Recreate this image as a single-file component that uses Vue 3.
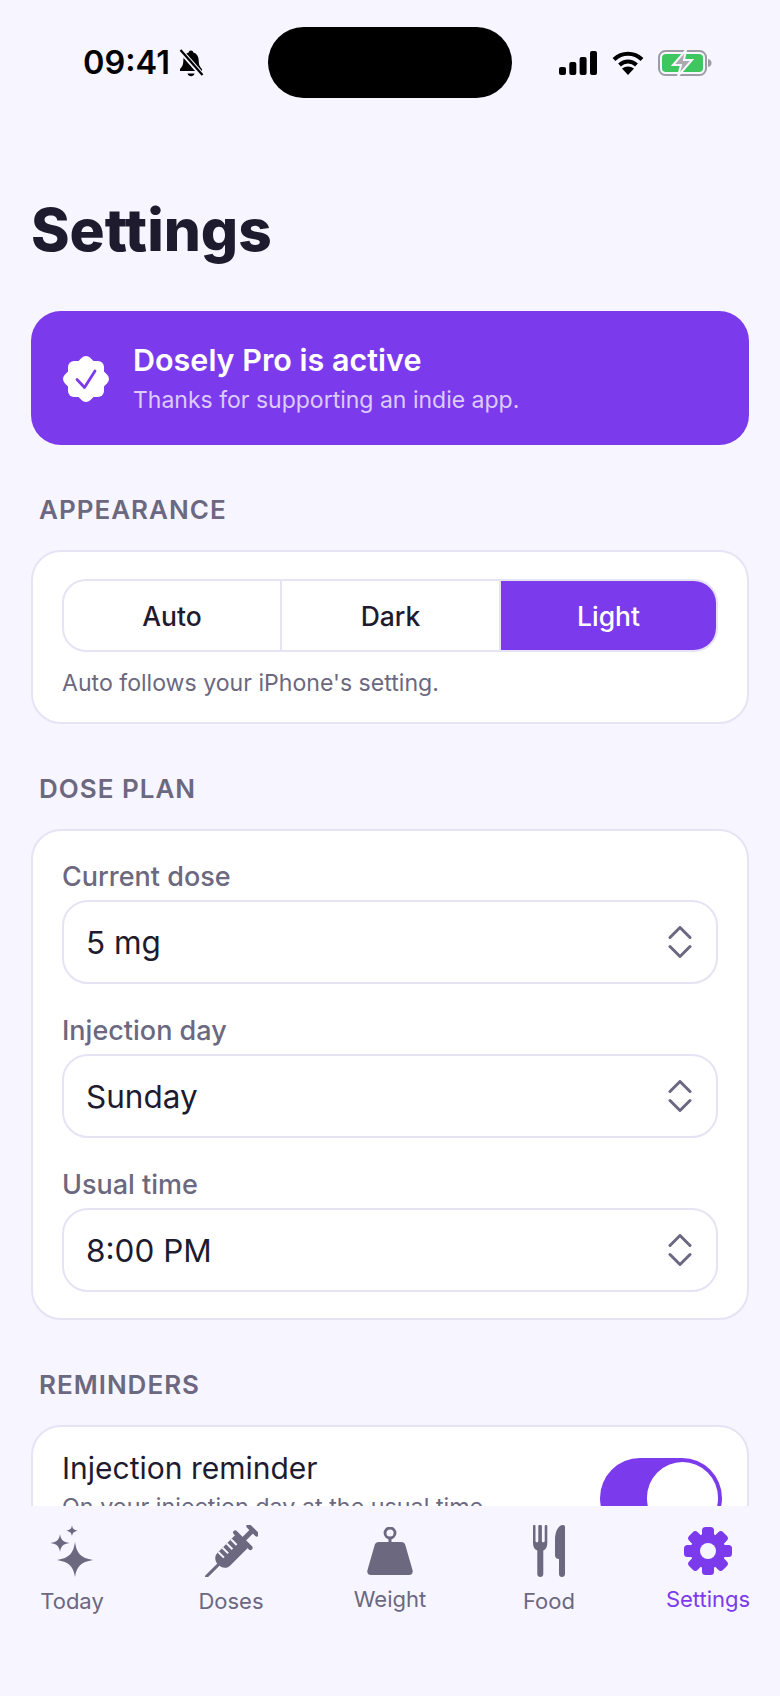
<template>
  <div class="phone">
    <header class="status-bar">
      <div class="status-left">
        <span class="clock">09:41</span>
        <svg class="bell" width="26" height="28" viewBox="0 0 26 28">
          <path d="M13 1.500c1.400 0 2.200.9 2.300 2 3.600 1 5.400 4 5.400 8 0 4.500 1.300 6.500 3.300 8.500v2H2v-2c2-2 3.300-4 3.300-8.500 0-4 1.800-7 5.400-8 .1-1.100.9-2 2.300-2z" fill="#000" />
          <path d="M9.500 24.500h7c-.4 1.700-1.800 2.800-3.500 2.800s-3.100-1.100-3.500-2.800z" fill="#000" />
          <path d="M2 1l22 25" stroke="#f7f5ff" stroke-width="5" />
          <path d="M2.500 1l22 25" stroke="#000" stroke-width="2.200" />
        </svg>
      </div>
      <div class="island"></div>
      <div class="status-right">
        <svg width="38" height="24" viewBox="0 0 38 24" fill="#000">
          <rect x="0" y="16" width="7" height="8" rx="2" />
          <rect x="10.300" y="11" width="7" height="13" rx="2" />
          <rect x="20.600" y="6" width="7" height="18" rx="2" />
          <rect x="31" y="0" width="7" height="24" rx="2" />
        </svg>
        <svg class="wifi" width="32" height="24" viewBox="0 0 32 24">
          <path d="M2 8.500c8-7.600 20-7.600 28 0M7.500 14c5-4.600 12-4.600 17 0" fill="none" stroke="#000" stroke-width="4" />
          <path d="M16 24l-6-6.400c3.500-2.800 8.500-2.800 12 0z" fill="#000" />
        </svg>
        <svg class="battery" width="54" height="26" viewBox="0 0 54 26">
          <rect x="1" y="1" width="47" height="24" rx="6.500" fill="none" stroke="#9d9da3" stroke-width="2" />
          <rect x="4" y="4" width="41" height="18" rx="4" fill="#3ec65f" />
          <path d="M50 9c2.500.5 3.500 2 3.500 4s-1 3.500-3.500 4z" fill="#9d9da3" />
          <path d="M28 0L15 15h8l-3 11 14-16h-8z" fill="#a9a9ae" stroke="#f7f5ff" stroke-width="2" />
        </svg>
      </div>
    </header>

    <main class="scroll">
      <h1 class="title">Settings</h1>

      <section class="pro-banner">
        <svg class="pro-badge" width="46" height="46" viewBox="0 0 46 46">
          <rect x="5" y="5" width="36" height="36" rx="6" fill="#fff" />
          <rect x="5" y="5" width="36" height="36" rx="6" fill="#fff" transform="rotate(45 23 23)" />
          <path d="M14 23.500l7.500 8L32 15" fill="none" stroke="#7c3aed" stroke-width="2.800" stroke-linecap="round" stroke-linejoin="round" />
        </svg>
        <div>
          <div class="pro-title">Dosely Pro is active</div>
          <div class="pro-sub">Thanks for supporting an indie app.</div>
        </div>
      </section>

      <h2 class="section-label">APPEARANCE</h2>
      <section class="card card-appearance">
        <div class="segments">
          <div
            v-for="mode in modes"
            :key="mode"
            class="segment"
            :class="{ active: mode === currentMode }"
          >{{ mode }}</div>
        </div>
        <p class="hint">Auto follows your iPhone's setting.</p>
      </section>

      <h2 class="section-label">DOSE PLAN</h2>
      <section class="card card-plan">
        <div v-for="field in planFields" :key="field.label" class="field">
          <div class="field-label">{{ field.label }}</div>
          <div class="select">
            <span>{{ field.value }}</span>
            <svg width="24" height="32" viewBox="0 0 24 32" fill="none" stroke="#6b6880" stroke-width="3" stroke-linecap="round" stroke-linejoin="round">
              <path d="M2 11.500L12 1.500l10 10" />
              <path d="M2 20.500l10 10 10-10" />
            </svg>
          </div>
        </div>
      </section>

      <h2 class="section-label">REMINDERS</h2>
      <section class="card card-reminders">
        <div class="reminder-text">
          <div class="reminder-title">Injection reminder</div>
          <div class="reminder-sub">On your injection day at the usual time.</div>
        </div>
        <div class="toggle"><div class="knob"></div></div>
      </section>
    </main>

    <nav class="tabbar">
      <div
        v-for="tab in tabs"
        :key="tab.label"
        class="tab"
        :class="{ active: tab.active }"
      >
        <svg v-if="tab.icon === 'today'" width="54" height="52" viewBox="6 0 54 52" fill="#6b6880">
          <path d="M36 17c1.500 11 5.500 16 18 18-12.500 2-16.500 7-18 17-1.500-10-5.500-15-18-17 12.500-2 16.500-7 18-18z" />
          <path d="M21 9c.7 5.500 3 8 9.500 9-6.500 1-8.800 3.500-9.500 9-.7-5.500-3-8-9.500-9 6.500-1 8.800-3.500 9.500-9z" />
          <path d="M33 0c.4 3.500 1.800 5 6 5.700-4.200.7-5.600 2.200-6 5.800-.4-3.600-1.800-5.100-6-5.800 4.200-.7 5.600-2.200 6-5.700z" />
        </svg>

        <svg v-else-if="tab.icon === 'doses'" width="54" height="52" viewBox="0 0 54 52">
          <g transform="rotate(45 27 27)" fill="#6b6880">
            <rect x="25.500" y="44" width="3" height="19" rx="1.500" />
            <path d="M18 12h18v25c0 5-4 8-9 8s-9-3-9-8z" />
            <rect x="14" y="8" width="26" height="4.500" rx="2.200" />
            <rect x="24.500" y="-3" width="5" height="12" />
            <rect x="19" y="-6" width="16" height="4.500" rx="2.200" />
            <path d="M18 18h8M18 24h8M18 30h8M18 36h8" stroke="#f7f5ff" stroke-width="2" fill="none" />
          </g>
        </svg>

        <svg v-else-if="tab.icon === 'weight'" class="icon-short" width="46" height="48" viewBox="0 0 46 48" fill="#6b6880">
          <circle cx="23" cy="6" r="5" fill="none" stroke="#6b6880" stroke-width="2.800" />
          <rect x="21.500" y="10" width="3" height="6" />
          <path d="M12 15h22c2.500 0 3.700 1 4.300 3l7.200 25c.8 3-1 5-3.500 5H4c-2.500 0-4.300-2-3.500-5L7.700 18c.6-2 1.800-3 4.300-3z" />
        </svg>

        <svg v-else-if="tab.icon === 'food'" width="34" height="52" viewBox="0 0 34 52" fill="#6b6880">
          <path d="M1 1.200C1 .4 1.500 0 2.200 0s1.300.4 1.300 1.200V16c0 .8.700 1.300 1.500 1.300s1.300-.5 1.300-1.300V1.200C6.300.4 6.900 0 7.600 0h1c.7 0 1.300.4 1.300 1.200V16c0 .8.500 1.300 1.300 1.300s1.500-.5 1.500-1.300V1.200c0-.8.600-1.200 1.300-1.200s1.300.4 1.300 1.200V18c0 4-1.600 6.500-4 7.600V49c0 1.800-1.300 3-3 3s-3-1.200-3-3V25.600C2.600 24.500 1 22 1 18z" />
          <path d="M31 0c1.300 0 2 .9 2 2v47c0 1.800-1.300 3-3 3s-3-1.200-3-3V34c-2.500 0-4-1.500-4-4V15C23 7 26 0 31 0z" />
        </svg>

        <svg v-else class="icon-short" width="48" height="48" viewBox="0 0 48 48" fill="#7c3aed">
          <rect
            v-for="angle in gearTeeth"
            :key="angle"
            x="18"
            y="0"
            width="12"
            height="14"
            rx="3.500"
            :transform="`rotate(${angle} 24 24)`"
          />
          <circle cx="24" cy="24" r="17.500" />
          <circle cx="24" cy="24" r="8" fill="#f7f5ff" />
        </svg>

        <span class="tab-label">{{ tab.label }}</span>
      </div>
    </nav>
  </div>
</template>

<script setup>
const modes = ['Auto', 'Dark', 'Light']
const currentMode = 'Light'

const planFields = [
  { label: 'Current dose', value: '5 mg' },
  { label: 'Injection day', value: 'Sunday' },
  { label: 'Usual time', value: '8:00 PM' }
]

const tabs = [
  { label: 'Today', icon: 'today' },
  { label: 'Doses', icon: 'doses' },
  { label: 'Weight', icon: 'weight' },
  { label: 'Food', icon: 'food' },
  { label: 'Settings', icon: 'settings', active: true }
]

const gearTeeth = [0, 45, 90, 135, 180, 225, 270, 315]
</script>

<style scoped>
.phone {
  width: 780px;
  height: 1696px;
  display: flex;
  flex-direction: column;
  overflow: hidden;
  background: #f7f5ff;
  color: #1e1b2e;
  font-family: Inter, "Noto Sans", sans-serif;
}

.status-bar {
  display: grid;
  grid-template-columns: 268px 244px 1fr;
  align-items: center;
  padding-top: 27px;
  flex-shrink: 0;
}

.status-left {
  display: flex;
  align-items: center;
  padding-left: 83px;
  gap: 8px;
}

.clock {
  font-size: 32.500px;
  font-weight: 600;
  color: #000;
  line-height: 36px;
}

.island {
  height: 71px;
  background: #000;
  border-radius: 36px;
}

.status-right {
  display: flex;
  align-items: center;
  padding-left: 47px;
}

.wifi {
  margin-left: 15px;
}

.battery {
  margin-left: 14px;
}

.scroll {
  flex: 1;
  min-height: 0;
  overflow: hidden;
  padding: 0 31px;
}

.title {
  margin: 98px 0 47px;
  font-size: 58.500px;
  line-height: 68px;
  font-weight: 800;
}

.pro-banner {
  height: 134px;
  display: flex;
  align-items: center;
  gap: 24px;
  padding-left: 32px;
  background: #7c3aed;
  border-radius: 30px;
  color: #fff;
}

.pro-badge {
  margin-top: 1px;
}

.pro-title {
  font-size: 30.500px;
  line-height: 36px;
  font-weight: 600;
}

.pro-sub {
  margin-top: 8px;
  font-size: 23px;
  line-height: 28px;
  color: #dccbfb;
}

.section-label {
  margin: 50px 0 25px 8px;
  font-size: 26px;
  line-height: 30px;
  font-weight: 600;
  letter-spacing: 1px;
  color: #6b6880;
}

.card {
  background: #fff;
  border: 2px solid #e6e3f5;
  border-radius: 30px;
  box-sizing: border-box;
}

.card-appearance {
  padding: 27px 29px 25px;
}

.segments {
  display: grid;
  grid-template-columns: 216px 219px 1fr;
  height: 73px;
  border: 2px solid #e6e3f5;
  border-radius: 24px;
  overflow: hidden;
  box-sizing: border-box;
}

.segment {
  display: flex;
  align-items: center;
  justify-content: center;
  font-size: 26.500px;
  font-weight: 500;
  border-left: 2px solid #e6e3f5;
}

.segment:first-child {
  border-left: none;
}

.segment.active {
  background: #7c3aed;
  color: #fff;
}

.hint {
  margin: 17px 0 0;
  font-size: 23.100px;
  line-height: 28px;
  color: #6b6880;
}

.card-plan {
  padding: 31px 29px 26px;
}

.field + .field {
  margin-top: 32px;
}

.field-label {
  font-size: 27px;
  line-height: 30px;
  font-weight: 500;
  color: #6b6880;
}

.select {
  margin-top: 8px;
  height: 84px;
  display: flex;
  align-items: center;
  justify-content: space-between;
  padding: 0 24px 0 22px;
  border: 2px solid #e6e3f5;
  border-radius: 26px;
  font-size: 31.500px;
  box-sizing: border-box;
}

.card-reminders {
  display: flex;
  align-items: flex-start;
  justify-content: space-between;
  padding: 23px 25px 24px 29px;
}

.reminder-title {
  font-size: 30px;
  line-height: 36px;
}

.reminder-sub {
  margin-top: 6px;
  font-size: 23.300px;
  line-height: 30px;
  color: #6b6880;
}

.toggle {
  flex-shrink: 0;
  margin-top: 8px;
  width: 122px;
  height: 80px;
  padding: 4px;
  display: flex;
  justify-content: flex-end;
  background: #7c3aed;
  border-radius: 40px;
  box-sizing: border-box;
}

.knob {
  width: 71px;
  height: 72px;
  background: #fff;
  border-radius: 36px;
}

.tabbar {
  flex-shrink: 0;
  height: 190px;
  display: flex;
  gap: 19px;
  padding: 19px 2px 0;
  box-sizing: border-box;
  background: #f7f5ff;
}

.tab {
  width: 140px;
  display: flex;
  flex-direction: column;
  align-items: center;
  color: #6b6880;
}

.tab.active {
  color: #7c3aed;
}

.icon-short {
  margin-top: 2px;
}

.tab-label {
  margin-top: 11px;
  font-size: 22px;
  line-height: 26px;
}
</style>

<style>
html, body {
  margin: 0;
  background: #f7f5ff;
}
</style>
